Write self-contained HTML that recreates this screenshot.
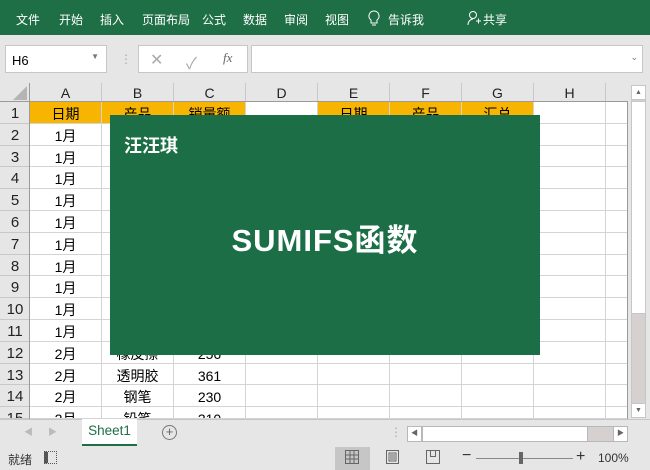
<!DOCTYPE html>
<html><head><meta charset="utf-8"><style>
*{margin:0;padding:0;box-sizing:border-box}
body{width:650px;height:470px;overflow:hidden;background:#e6e6e6;font-family:"Liberation Sans","Noto Sans CJK SC",sans-serif;position:relative}
.a{position:absolute}
.rib{left:0;top:0;width:650px;height:35px;background:#1e6e46;color:#fff;font-size:12px}
.rib span{position:absolute;top:11px}
.box{background:#fff;border:1px solid #c6c6c6}
.ch{top:83px;height:19px;background:#e6e6e6;border-right:1px solid #c8c8c8;text-align:center;font-size:14px;line-height:20px;color:#222}
.rh{left:0;width:30px;background:#e6e6e6;border-bottom:1px solid #c8c8c8;text-align:center;font-size:15px;color:#222;padding-top:3px}
.c{height:22px;border-right:1px solid #d4d4d4;border-bottom:1px solid #d4d4d4;background:#fff;text-align:center;font-size:14px;line-height:24px;color:#000}
.y{background:#f7b400}
</style></head><body>
<div class="a rib">
<span style="left:16px">文件</span><span style="left:59px">开始</span><span style="left:100px">插入</span><span style="left:142px">页面布局</span><span style="left:202px">公式</span><span style="left:243px">数据</span><span style="left:284px">审阅</span><span style="left:325px">视图</span>
<svg class="a" style="left:368px;top:10px" width="12" height="18" viewBox="0 0 12 18"><path d="M6 1a5 5 0 0 0-3 9v3h6v-3a5 5 0 0 0-3-9zM4 15h4" fill="none" stroke="#fff" stroke-width="1"/></svg>
<span style="left:388px">告诉我</span>
<svg class="a" style="left:467px;top:10px" width="14" height="16" viewBox="0 0 14 16"><circle cx="6" cy="5" r="3.5" fill="none" stroke="#fff"/><path d="M1 15c0-4 3-6 5-6M9 11h5M11.5 8.5v5" fill="none" stroke="#fff"/></svg>
<span style="left:483px">共享</span>
</div>
<div class="a box" style="left:5px;top:45px;width:102px;height:28px;font-size:13px;padding:7px 0 0 6px">H6<span class="a" style="right:7px;top:6px;font-size:8px;color:#777">▼</span></div>
<div class="a" style="left:120px;top:52px;color:#aaa;font-size:12px">⋮</div>
<div class="a box" style="left:138px;top:45px;width:110px;height:28px;color:#aaa;font-size:16px">
<span class="a" style="left:11px;top:4px">✕</span><span class="a" style="left:47px;top:4px">✓</span><span class="a" style="left:84px;top:4px;font-family:'Liberation Serif',serif;font-style:italic;font-size:13px;color:#666">fx</span></div>
<div class="a box" style="left:251px;top:45px;width:392px;height:28px"><span class="a" style="right:4px;top:6px;font-size:9px;color:#777">⌄</span></div>
<div class="a" style="left:0;top:83px;width:30px;height:19px;background:#e6e6e6;border-right:1px solid #c8c8c8"><svg class="a" style="left:13px;top:3px" width="14" height="14"><path d="M14 0L14 14L0 14Z" fill="#b4b4b4"/></svg></div>
<div id="g"></div>
<div class="a" style="left:0;top:101px;width:628px;height:1px;background:#9a9a9a"></div>
<div class="a" style="left:29px;top:83px;width:1px;height:336px;background:#9a9a9a"></div>
<div class="a" style="left:627px;top:83px;width:23px;height:336px;background:#e6e6e6"></div>
<div class="a" style="left:627px;top:101px;width:1px;height:318px;background:#9a9a9a"></div>
<div class="a" style="left:631px;top:85px;width:15px;height:333px;background:#d6d0d0;border:1px solid #c6c6c6"></div>
<div class="a" style="left:631px;top:85px;width:15px;height:15px;background:#fff;border:1px solid #c6c6c6;font-size:7px;text-align:center;color:#666;line-height:13px">▲</div>
<div class="a" style="left:631px;top:101px;width:15px;height:213px;background:#fff;border:1px solid #c6c6c6"></div>
<div class="a" style="left:631px;top:403px;width:15px;height:15px;background:#fff;border:1px solid #c6c6c6;font-size:7px;text-align:center;color:#666;line-height:13px">▼</div>
<div class="a" style="left:0;top:419px;width:650px;height:1px;background:#c6c6c6"></div>
<div class="a" style="left:24px;top:425px;color:#bbb;font-size:9px">◀&nbsp;&nbsp;&nbsp;&nbsp;&nbsp;&nbsp;▶</div>
<div class="a" style="left:82px;top:419px;width:55px;height:27px;background:#fff;border-bottom:2px solid #1e6e46;color:#1e6e46;font-size:13.5px;text-align:center;line-height:24px">Sheet1</div>
<div class="a" style="left:162px;top:425px;width:15px;height:15px;border:1px solid #777;border-radius:50%;text-align:center;font-size:13px;line-height:12px;color:#666">+</div>
<div class="a" style="left:390px;top:425px;color:#aaa;font-size:12px">⋮</div>
<div class="a" style="left:407px;top:426px;width:221px;height:16px;background:#d6d0d0;border:1px solid #b8b8b8"></div>
<div class="a" style="left:407px;top:426px;width:15px;height:16px;background:#fff;border:1px solid #b8b8b8;font-size:7px;line-height:14px;text-align:center;color:#666">◀</div>
<div class="a" style="left:422px;top:426px;width:166px;height:16px;background:#fff;border:1px solid #b8b8b8"></div>
<div class="a" style="left:613px;top:426px;width:15px;height:16px;background:#fff;border:1px solid #b8b8b8;font-size:7px;line-height:14px;text-align:center;color:#666">▶</div>
<div class="a" style="left:0;top:447px;width:650px;height:23px;background:#e6e6e6;font-size:12px;color:#333">
<span class="a" style="left:8px;top:4px">就绪</span>
<div class="a" style="left:44px;top:4px;width:13px;height:13px;border:1px dotted #555;border-left:4px solid #555"></div>
<div class="a" style="left:335px;top:0;width:35px;height:23px;background:#c6c6c6"></div>
<svg class="a" style="left:345px;top:3px" width="14" height="14"><path d="M.5.5h13v13H.5zM5 .5v13M9 .5v13M.5 5h13M.5 9h13" fill="none" stroke="#666"/></svg>
<svg class="a" style="left:386px;top:3px" width="14" height="14"><path d="M.5.5h12v13H.5zM3 3h7v8H3zM4 5h5M4 7h5M4 9h5" fill="none" stroke="#666"/></svg>
<svg class="a" style="left:426px;top:3px" width="14" height="14"><path d="M.5.5h13v13H.5zM4.5.5v6h5v-6" fill="none" stroke="#666"/></svg>
<span class="a" style="left:462px;top:0;font-size:16px">−</span>
<div class="a" style="left:476px;top:11px;width:97px;height:1px;background:#888"></div>
<div class="a" style="left:519px;top:5px;width:4px;height:12px;background:#666"></div>
<span class="a" style="left:576px;top:1px;font-size:16px">+</span>
<span class="a" style="left:598px;top:4px">100%</span>
</div>
<div class="a" style="left:110px;top:115px;width:430px;height:240px;background:#1b6e46;color:#fff;font-weight:bold">
<div class="a" style="left:14px;top:17px;font-size:18px">汪汪琪</div>
<div class="a" style="left:0;width:430px;top:100px;text-align:center;font-size:31px;letter-spacing:1px">SUMIFS函数</div>
</div>
<script>
var cols=[30,102,174,246,318,390,462,534,606,628],L="ABCDEFGH",h='';
for(var i=0;i<8;i++)h+='<div class="a ch" style="left:'+cols[i]+'px;width:'+(cols[i+1]-cols[i])+'px">'+L[i]+'</div>';
h+='<div class="a ch" style="left:606px;width:22px"></div>';
var A=["日期","1月","1月","1月","1月","1月","1月","1月","1月","1月","1月","2月","2月","2月","2月"];
var B=["产品","","","","","","","","","","","橡皮擦","透明胶","钢笔","铅笔"];
var C=["销量额","","","","","","","","","","","256","361","230","310"];
var E=["日期","产品","汇总"];
for(var r=0;r<15;r++){var t=102+r*21.8;var hh=Math.min(21.8,419-t);if(hh<=0)break;
h+='<div class="a rh" style="top:'+t+'px;height:'+hh+'px;overflow:hidden">'+(r+1)+'</div>';
for(var c=0;c<9;c++){var txt='',cl='c';
if(c==0)txt=A[r];if(c==1)txt=B[r];if(c==2)txt=C[r];
if(r==0&&(c<3||(c>=4&&c<=6))){cl+=' y';if(c>=4)txt=E[c-4];}
h+='<div class="a '+cl+'" style="left:'+cols[c]+'px;top:'+t+'px;width:'+(cols[c+1]-cols[c])+'px;height:'+hh+'px;overflow:hidden">'+txt+'</div>';}}
document.getElementById('g').innerHTML=h;
</script>
</body></html>
